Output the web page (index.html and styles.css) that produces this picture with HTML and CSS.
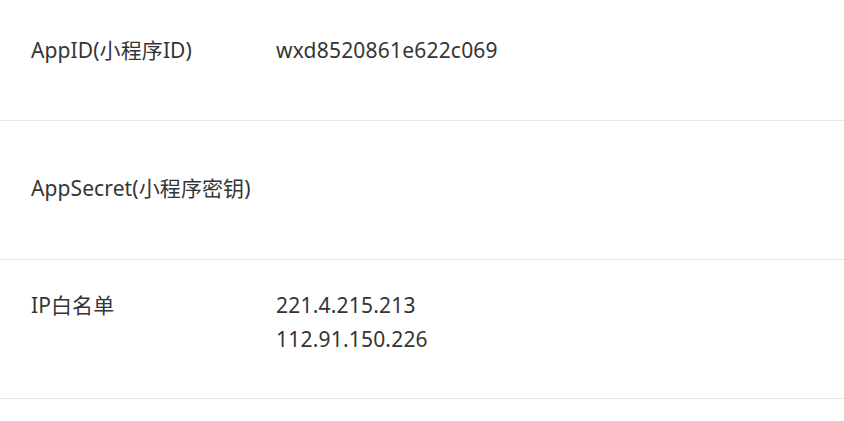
FILE: index.html
```html
<!DOCTYPE html>
<html lang="zh-CN">
<head>
<meta charset="utf-8">
<title>开发设置</title>
<link rel="stylesheet" href="styles.css">
</head>
<body>
<div class="list">
  <div class="row row-first">
    <div class="label">AppID(小程序ID)</div>
    <div class="value">wxd8520861e622c069</div>
  </div>
  <div class="row row-mid">
    <div class="label">AppSecret(小程序密钥)</div>
    <div class="value"></div>
  </div>
  <div class="row row-top">
    <div class="label">IP白名单</div>
    <div class="value">
      <div>221.4.215.213</div>
      <div>112.91.150.226</div>
    </div>
  </div>
</div>
</body>
</html>
```
FILE: styles.css
```css
html, body {
  margin: 0;
  padding: 0;
  background: #ffffff;
}
body {
  font-family: "Noto Sans", "Noto Sans CJK SC", sans-serif;
  font-size: 21px;
  color: #353535;
  overflow: hidden;
}
.list {
  display: flex;
  flex-direction: column;
}
.row {
  display: flex;
  border-bottom: 1px solid #e8e8e8;
  box-sizing: border-box;
  padding-left: 31px;
  line-height: 34px;
}
.row-first {
  height: 121px;
  align-items: center;
  padding-bottom: 20px;
}
.row-mid {
  height: 139px;
  align-items: center;
  padding-bottom: 4px;
}
.row-top {
  height: 139px;
  align-items: flex-start;
  padding-top: 28px;
}
.label {
  width: 245px;
  flex: none;
  white-space: nowrap;
  letter-spacing: 0.1px;
}
.value {
  flex: 1;
  letter-spacing: 0.2px;
}
```
